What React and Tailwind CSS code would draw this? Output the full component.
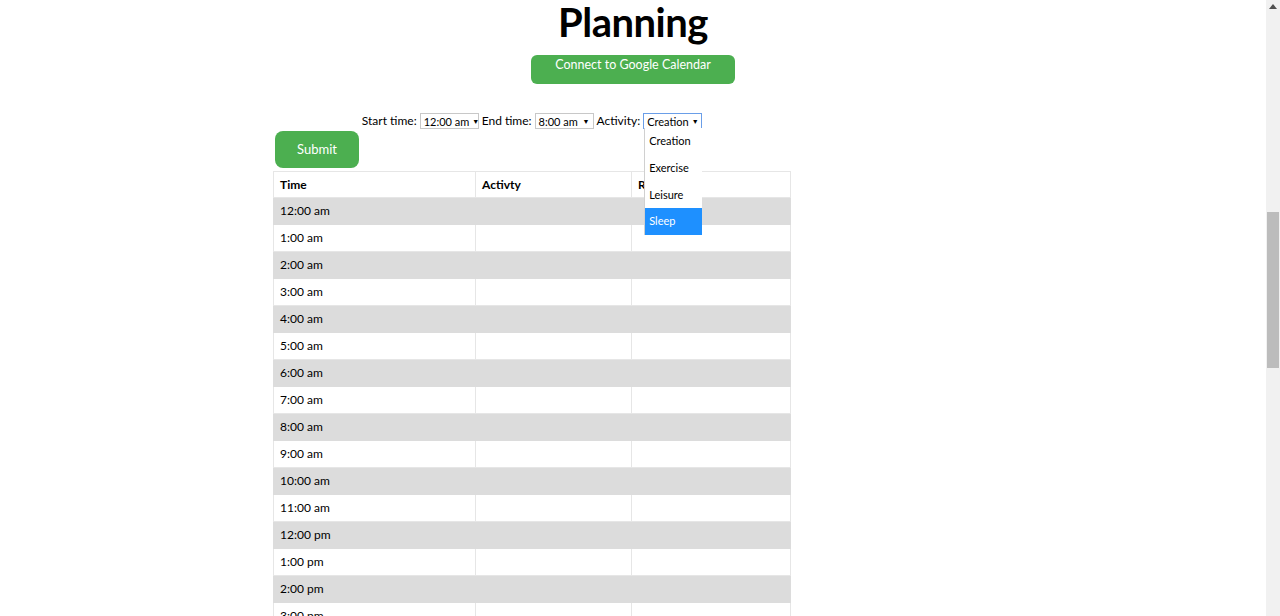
import React from 'react';

const hours = [
  '12:00 am', '1:00 am', '2:00 am', '3:00 am', '4:00 am', '5:00 am', '6:00 am', '7:00 am',
  '8:00 am', '9:00 am', '10:00 am', '11:00 am', '12:00 pm', '1:00 pm', '2:00 pm', '3:00 pm',
  '4:00 pm', '5:00 pm',
];

function FakeSelect({ value, width, focused }) {
  return (
    <div
      className={`flex items-center justify-between h-[16px] px-[3px] bg-white text-[11px] leading-none whitespace-nowrap ${width} ${
        focused ? 'border border-[#6a9ee8]' : 'border border-[#c8c8c8]'
      }`}
    >
      <span>{value}</span>
      <span className="text-[7px] ml-[3px]">▼</span>
    </div>
  );
}

export default function App() {
  const font = { fontFamily: 'Lato, "Open Sans", sans-serif' };

  return (
    <div className="flex h-[616px] overflow-hidden bg-white text-black" style={font}>
      <div className="flex-1 flex flex-col">
        <div className="flex flex-col items-center">
          <h1 className="text-[40px] font-bold leading-none mt-[2px] tracking-[-0.5px]">Planning</h1>
          <button className="mt-[13px] w-[204px] h-[29px] rounded-[6px] bg-[#4caf50] text-white text-[12.5px] pb-[8px]">
            Connect to Google Calendar
          </button>
        </div>

        <div className="mt-[29px] ml-[273px] w-[518px]">
          <div className="flex items-center justify-center gap-[3px] text-[12px] h-[16px] whitespace-nowrap">
            <span>Start time:</span>
            <FakeSelect value="12:00 am" width="w-[59px]" />
            <span>End time:</span>
            <FakeSelect value="8:00 am" width="w-[59px]" />
            <span>Activity:</span>
            <div className="relative">
              <FakeSelect value="Creation" width="w-[59px]" focused />
              <div className="absolute left-[1px] top-[15px] w-[58px] z-10 bg-white border-l border-[#d0d0d0] text-[11px]">
                <div className="h-[27px] flex items-center px-[4px]">Creation</div>
                <div className="h-[27px] flex items-center px-[4px]">Exercise</div>
                <div className="h-[26px] flex items-center px-[4px]">Leisure</div>
                <div className="h-[27px] flex items-center px-[4px] bg-[#1e90ff] text-white">Sleep</div>
              </div>
            </div>
          </div>

          <button className="mt-[2px] ml-[2px] w-[84px] h-[37px] rounded-[8px] bg-[#4caf50] text-white text-[13px]">
            Submit
          </button>

          <table className="mt-[3px] w-[518px] border-collapse text-[12px]">
            <thead>
              <tr className="h-[26px]">
                <th className="w-[202px] border border-[#e6e6e6] text-left font-bold px-[6px]">Time</th>
                <th className="w-[156px] border border-[#e6e6e6] text-left font-bold px-[6px]">Activty</th>
                <th className="border border-[#e6e6e6] text-left font-bold px-[6px]">Rating</th>
              </tr>
            </thead>
            <tbody>
              {hours.map((h, i) => (
                <tr key={h} className={i % 2 === 0 ? 'h-[27px] bg-[#dcdcdc]' : 'h-[27px] bg-white'}>
                  <td className={`px-[6px] border ${i % 2 === 0 ? 'border-[#dcdcdc]' : 'border-[#e6e6e6]'}`}>{h}</td>
                  <td className={`border ${i % 2 === 0 ? 'border-[#dcdcdc]' : 'border-[#e6e6e6]'}`}></td>
                  <td className={`border ${i % 2 === 0 ? 'border-[#dcdcdc]' : 'border-[#e6e6e6]'}`}></td>
                </tr>
              ))}
            </tbody>
          </table>
        </div>
      </div>

      {/* scrollbar */}
      <div className="w-[14px] bg-[#f1f1f1] flex flex-col items-center">
        <svg width="8" height="5" viewBox="0 0 8 5" className="mt-[4px]">
          <path d="M0 5 L4 0 L8 5 Z" fill="#505050" />
        </svg>
        <div className="mt-[203px] w-[12px] h-[156px] bg-[#bcbcbc]" />
      </div>
    </div>
  );
}
